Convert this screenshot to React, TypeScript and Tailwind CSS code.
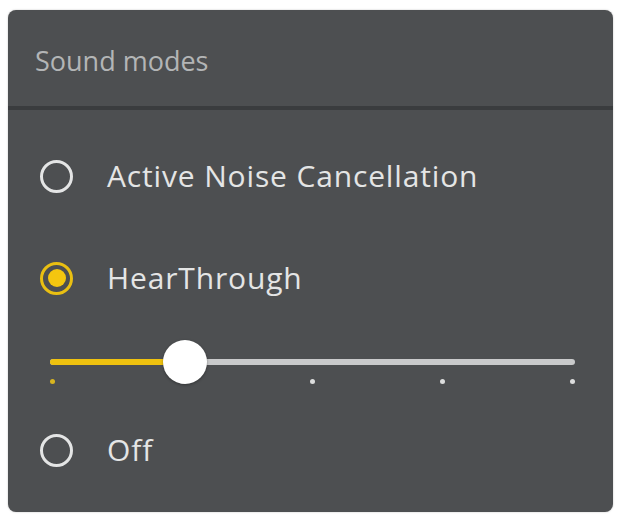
import React from "react";

function Radio({ checked }: { checked?: boolean }) {
  if (checked) {
    return (
      <div className="w-[33px] h-[33px] rounded-full border-[3px] border-[#e9bf12] flex items-center justify-center shrink-0">
        <div className="w-[18px] h-[18px] rounded-full bg-[#f4c60f]" />
      </div>
    );
  }
  return <div className="w-[33px] h-[33px] rounded-full border-[3px] border-[#e4e5e5] shrink-0" />;
}

function Row({ label, checked }: { label: string; checked?: boolean }) {
  return (
    <div className="h-[72px] flex items-center pl-[32px]">
      <Radio checked={checked} />
      <span className="ml-[34px] text-[30px] tracking-[0.85px] text-[#e4e5e5] leading-none">{label}</span>
    </div>
  );
}

export default function App() {
  const ticks = [0, 1, 2, 3, 4];
  return (
    <div
      className="w-[617px] h-[515px] bg-white pt-[10px] px-[8px]"
      style={{ fontFamily: '"Open Sans", "Noto Sans", sans-serif' }}
    >
      <div className="w-[605px] h-[502px] rounded-[8px] bg-[#4d4f51] flex flex-col overflow-hidden shadow-[0_0_2px_rgba(0,0,0,0.25)]">
        <div className="h-[96px] flex items-center px-[27px] pt-[4px]">
          <span className="text-[27px] text-[#b3b5b6] leading-none">Sound modes</span>
        </div>
        <div className="h-[4px] bg-[#3a3c3e]" />
        <div className="pt-[30px] flex flex-col">
          <Row label="Active Noise Cancellation" />
          <div className="mt-[30px]">
            <Row label="HearThrough" checked />
          </div>
          <div className="h-[76px] pt-[45px] ml-[42px] w-[525px]">
            <div className="relative h-[6px] rounded-full bg-[#c9cacb]">
              <div className="absolute left-0 top-0 h-[6px] w-[135px] rounded-full bg-[#efc20f]" />
              <div className="absolute left-[113px] top-[-19px] w-[44px] h-[44px] rounded-full bg-white shadow-[0_1px_3px_rgba(0,0,0,0.35)]" />
            </div>
            <div className="mt-[14px] flex justify-between">
              {ticks.map((t) => (
                <div
                  key={t}
                  className={t === 0 ? "w-[5px] h-[5px] rounded-full bg-[#d8b520]" : "w-[5px] h-[5px] rounded-full bg-[#dcdddd]"}
                />
              ))}
            </div>
          </div>
          <div className="mt-[24px]">
            <Row label="Off" />
          </div>
        </div>
      </div>
    </div>
  );
}
